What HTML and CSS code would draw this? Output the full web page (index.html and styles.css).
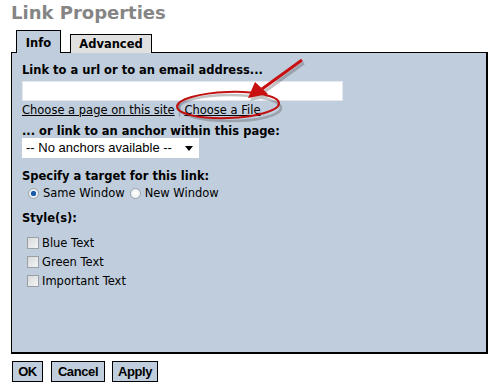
FILE: index.html
```html
<!DOCTYPE html>
<html>
<head>
<meta charset="utf-8">
<link rel="stylesheet" href="styles.css">
</head>
<body>
<h1 class="title">Link Properties</h1>
<div class="tabs">
  <div class="tab active">Info</div>
  <div class="tab">Advanced</div>
</div>
<div class="panel">
  <div class="label">Link to a url or to an email address...</div>
  <div class="textbox"></div>
  <div class="links"><a class="link">Choose a page on this site</a><span class="sep">|</span><a class="link">Choose a File</a></div>
  <div class="label">... or link to an anchor within this page:</div>
  <div class="select"><span class="seltext">-- No anchors available --</span><span class="caret"></span></div>
  <div class="label target">Specify a target for this link:</div>
  <div class="radios">
    <span class="radio checked"></span><span class="rlabel">Same Window</span>
    <span class="radio"></span><span class="rlabel">New Window</span>
  </div>
  <div class="label styles">Style(s):</div>
  <div class="checks">
    <div class="check"><span class="box"></span>Blue Text</div>
    <div class="check"><span class="box"></span>Green Text</div>
    <div class="check"><span class="box"></span>Important Text</div>
  </div>
</div>
<div class="buttons">
  <div class="btn btn-ok">OK</div>
  <div class="btn btn-cancel">Cancel</div>
  <div class="btn btn-apply">Apply</div>
</div>
<svg class="annot" width="496" height="385" viewBox="0 0 496 385">
  <g transform="translate(2,3)" opacity="0.35">
    <ellipse cx="228" cy="105" rx="51" ry="13" fill="none" stroke="#555" stroke-width="2.5"/>
    <line x1="302" y1="60" x2="262" y2="89" stroke="#555" stroke-width="3"/>
    <polygon points="248,98 255,82 268,94" fill="#555"/>
  </g>
  <ellipse cx="228" cy="105" rx="51" ry="13" fill="none" stroke="#c01010" stroke-width="2" transform="rotate(-2 228 105)"/>
  <line x1="302" y1="60" x2="262" y2="89" stroke="#c81010" stroke-width="3"/>
  <polygon points="248,98 255,82 268,94" fill="#c81010"/>
</svg>
</body>
</html>
```
FILE: styles.css
```css
html, body {
  margin: 0;
  padding: 0;
  background: #ffffff;
  width: 496px;
  height: 385px;
  overflow: hidden;
  position: relative;
  font-family: "DejaVu Sans", Verdana, sans-serif;
  font-size: 11.5px;
  color: #000;
}
.title {
  margin: 0;
  padding: 1px 0 0 11px;
  height: 30px;
  font-size: 18px;
  line-height: 24px;
  font-weight: bold;
  color: #858585;
}
.tabs {
  display: flex;
  align-items: flex-end;
  padding-left: 16px;
  gap: 9px;
  height: 22px;
  position: relative;
  z-index: 1;
  margin-bottom: -1px;
}
.tab {
  border: 1px solid #000;
  border-bottom: none;
  background: #e0e0e0;
  font-weight: bold;
  height: 19px;
  line-height: 18px;
  width: 82px;
  text-align: center;
  box-sizing: border-box;
}
.tab.active {
  background: #bfcddc;
  height: 23px;
  line-height: 24px;
  width: 45px;
}
.panel {
  margin-left: 11px;
  width: 477px;
  height: 302px;
  box-sizing: border-box;
  border: 1px solid #000;
  border-width: 1px 2px 2px 1px;
  background: #bfcddc;
  padding: 10px 0 0 10px;
}
.label {
  font-weight: bold;
  line-height: 14px;
  height: 14px;
  white-space: nowrap;
}
.textbox {
  margin-top: 4px;
  width: 321px;
  height: 20px;
  box-sizing: border-box;
  background: #fff;
  border: 1px solid #e4e8ee;
}
.links {
  margin-top: 2px;
  line-height: 14px;
  height: 21px;
  white-space: nowrap;
}
.link {
  text-decoration: underline;
  color: #000;
}
.sep {
  color: #8a96a8;
  margin: 0 3px 0 3px;
}
.select {
  margin-top: 0;
  width: 177px;
  height: 20px;
  box-sizing: border-box;
  background: #fff;
  font-family: "Liberation Sans", Arial, sans-serif;
  font-size: 13px;
  line-height: 20px;
  padding-left: 4px;
  padding-right: 6px;
  display: flex;
  align-items: center;
  justify-content: space-between;
  white-space: nowrap;
}
.caret {
  width: 0;
  height: 0;
  border-left: 4px solid transparent;
  border-right: 4px solid transparent;
  border-top: 5px solid #000;
  margin-top: 1px;
}
.label.target {
  margin-top: 11px;
}
.radios {
  display: flex;
  align-items: center;
  height: 16px;
  margin-top: 2px;
  padding-left: 6px;
}
.radio {
  width: 11px;
  height: 11px;
  box-sizing: border-box;
  border-radius: 50%;
  border: 1px solid #9aa4ae;
  background: radial-gradient(circle, #ffffff 0, #eef0f2 70%, #d8dde2 100%);
  margin-right: 4px;
  position: relative;
}
.radio.checked::after {
  content: "";
  position: absolute;
  left: 2px;
  top: 2px;
  width: 5px;
  height: 5px;
  border-radius: 50%;
  background: #1a5aa8;
  box-shadow: 0 0 1px #4a8ad8;
}
.rlabel {
  margin-right: 5px;
}
.label.styles {
  margin-top: 10px;
}
.checks {
  margin-top: 8px;
  padding-left: 5px;
}
.check {
  display: flex;
  align-items: center;
  height: 19px;
}
.box {
  width: 12px;
  height: 12px;
  box-sizing: border-box;
  border: 1px solid #9aa0a6;
  background: linear-gradient(135deg, #d8dadc, #f4f4f4);
  margin-right: 3px;
}
.buttons {
  display: flex;
  padding-left: 12px;
  margin-top: 7px;
}
.btn {
  height: 21px;
  box-sizing: border-box;
  border: 1px solid #000;
  background: #bfcddc;
  font-family: "Liberation Sans", Arial, sans-serif;
  font-weight: bold;
  font-size: 13px;
  line-height: 19px;
  text-align: center;
  letter-spacing: -0.4px;
}
.btn-ok { width: 31px; }
.btn-cancel { width: 54px; margin-left: 8px; }
.btn-apply { width: 46px; margin-left: 7px; }
.annot {
  position: absolute;
  left: 0;
  top: 0;
  pointer-events: none;
}
```
